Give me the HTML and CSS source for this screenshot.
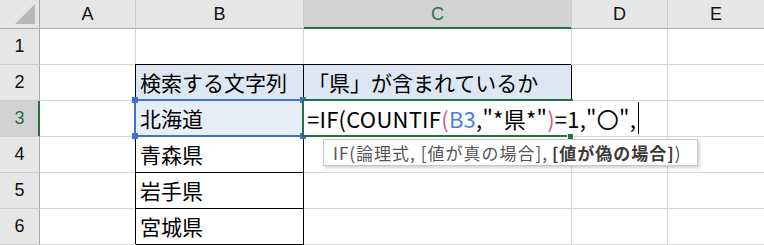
FILE: index.html
```html
<!DOCTYPE html>
<html lang="ja">
<head>
  <meta charset="UTF-8">
  <title>IF COUNTIF</title>
  <link rel="stylesheet" href="styles.css">
</head>
<body>
  <div class="sheet">
    <div class="grid">
      <div class="corner">
        <svg width="20" height="20" viewBox="0 0 20 20"><polygon points="0,20 20,0 20,20" fill="#b7b7b7"/></svg>
      </div>
      <div class="colhead">A</div>
      <div class="colhead">B</div>
      <div class="colhead active">C</div>
      <div class="colhead">D</div>
      <div class="colhead last">E</div>

      <div class="rowhead">1</div>
      <div class="cell"></div>
      <div class="cell"></div>
      <div class="cell"></div>
      <div class="cell"></div>
      <div class="cell last"></div>

      <div class="rowhead">2</div>
      <div class="cell"></div>
      <div class="cell box fill">検索する文字列</div>
      <div class="cell box fill">「県」が含まれているか</div>
      <div class="cell"></div>
      <div class="cell last"></div>

      <div class="rowhead active">3</div>
      <div class="cell"></div>
      <div class="cell box ref">北海道</div>
      <div class="cell"></div>
      <div class="cell"></div>
      <div class="cell last"></div>

      <div class="rowhead">4</div>
      <div class="cell"></div>
      <div class="cell box">青森県</div>
      <div class="cell"></div>
      <div class="cell"></div>
      <div class="cell last"></div>

      <div class="rowhead">5</div>
      <div class="cell"></div>
      <div class="cell box">岩手県</div>
      <div class="cell"></div>
      <div class="cell"></div>
      <div class="cell last"></div>

      <div class="rowhead">6</div>
      <div class="cell"></div>
      <div class="cell box">宮城県</div>
      <div class="cell"></div>
      <div class="cell"></div>
      <div class="cell last"></div>
    </div>

    <!-- reference highlight on B3 -->
    <div class="refbox">
      <span class="handle tl"></span>
      <span class="handle tr"></span>
      <span class="handle bl"></span>
      <span class="handle br"></span>
    </div>

    <!-- C3 in edit mode -->
    <div class="editbox"></div>
    <div class="editor">=IF(COUNTIF<span class="paren">(</span><span class="refword">B3</span>,"*県*"<span class="paren">)</span>=1,"〇",<span class="caret"></span></div>
    <span class="fillhandle"></span>

    <div class="tip">IF(論理式, [値が真の場合], <b>[値が偽の場合]</b>)</div>
  </div>
</body>
</html>
```

FILE: styles.css
```css
* {
  margin: 0;
  padding: 0;
  box-sizing: border-box;
}

body {
  background: #fff;
  overflow: hidden;
  font-family: "Noto Sans CJK JP", "Noto Sans", sans-serif;
}

.sheet {
  position: relative;
  width: 764px;
  height: 245px;
}

.grid {
  display: grid;
  grid-template-columns: 40px 96px 168px 268px 96px 96px;
  grid-template-rows: 29px repeat(6, 36px);
}

.corner,
.colhead,
.rowhead {
  background: #e6e6e6;
  display: flex;
  align-items: center;
  justify-content: center;
  font-family: "Liberation Sans", Arial, sans-serif;
  font-size: 18px;
  color: #111;
}

.corner {
  border-right: 1px solid #a9a9a9;
  border-bottom: 1px solid #a9a9a9;
  align-items: flex-end;
  justify-content: flex-end;
  padding: 0 4px 4px 0;
}

.corner svg {
  display: block;
}

.colhead {
  border-right: 1px solid #cbcbcb;
  border-bottom: 1px solid #a9a9a9;
  padding-top: 1px;
}

.rowhead {
  border-right: 1px solid #a9a9a9;
  border-bottom: 1px solid #cbcbcb;
}

.colhead.active {
  background: #d2d2d2;
  color: #217346;
  border-bottom-color: #217346;
  box-shadow: inset 0 -1px 0 #217346;
}

.rowhead.active {
  background: #d2d2d2;
  color: #217346;
  border-right-color: #217346;
  box-shadow: inset -1px 0 0 #217346;
}

.cell {
  border-right: 1px solid #d4d4d4;
  border-bottom: 1px solid #d4d4d4;
  display: flex;
  align-items: center;
  padding: 0 0 1px 4px;
  font-size: 21px;
  color: #000;
  white-space: nowrap;
}

.last {
  border-right: none;
}

.box {
  border-right-color: #000;
  border-bottom-color: #000;
  box-shadow: -1px -1px 0 #000;
}

.fill {
  background: #dde7f3;
}

.ref {
  background: #e8eef8;
}

.refbox {
  position: absolute;
  left: 134px;
  top: 99px;
  width: 170px;
  height: 38px;
  border: 2px solid #4173c7;
}

.handle {
  position: absolute;
  width: 6px;
  height: 6px;
  background: #3f71c4;
}

.handle.tl { left: -4px; top: -4px; }
.handle.tr { right: -4px; top: -4px; }
.handle.bl { left: -4px; bottom: -4px; }
.handle.br { right: -4px; bottom: -4px; }

.editbox {
  position: absolute;
  left: 302px;
  top: 99px;
  width: 271px;
  height: 38px;
  border: 2px solid #217346;
}

.editor {
  position: absolute;
  left: 304px;
  top: 101px;
  width: 337px;
  height: 34px;
  background: #fff;
  display: flex;
  align-items: center;
  padding: 0 0 1px 3px;
  font-size: 22px;
  letter-spacing: 0.25px;
  color: #000;
  white-space: nowrap;
}

.paren {
  color: #d25b8c;
}

.refword {
  color: #4a7fd2;
}

.caret {
  display: inline-block;
  width: 1px;
  height: 32px;
  margin-left: 2px;
  background: #000;
}

.fillhandle {
  position: absolute;
  left: 567px;
  top: 133px;
  width: 7px;
  height: 7px;
  background: #217346;
  border: 1px solid #fff;
}

.tip {
  position: absolute;
  left: 323px;
  top: 139px;
  width: 375px;
  height: 27px;
  background: #fff;
  border: 1px solid #c6c6c6;
  box-shadow: 2px 2px 3px rgba(0, 0, 0, 0.18);
  padding: 0 0 0 9px;
  display: flex;
  align-items: center;
  font-size: 17px;
  letter-spacing: 1px;
  color: #555;
  white-space: nowrap;
}

.tip b {
  color: #3c3c3c;
  margin-left: 4px;
}
```
